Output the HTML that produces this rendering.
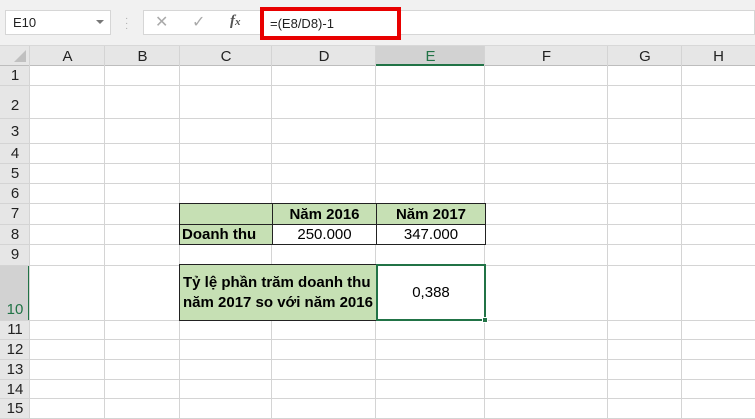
<!DOCTYPE html>
<html><head><style>
body{margin:0;width:755px;height:419px;overflow:hidden;background:#fff;font-family:"Liberation Sans",Arial,sans-serif;position:relative}
.a{position:absolute;box-sizing:border-box}
.hl{position:absolute;left:0;width:755px;height:1px;background:#d4d4d4}
.vl{position:absolute;top:46px;height:373px;width:1px;background:#d4d4d4}
.ch{position:absolute;top:46px;height:20px;line-height:21px;text-align:center;font-size:15px;color:#222}
.rh{position:absolute;left:0;width:30px;text-align:center;font-size:15px;color:#222}
.c{position:absolute;box-sizing:border-box;font-size:15px;display:flex;align-items:center;justify-content:center}
</style></head><body>
<div class="a" style="left:0;top:0;width:755px;height:46px;background:#f1f1f1;border-bottom:1px solid #d8d8d8"></div>
<div class="a" style="left:5px;top:10px;width:106px;height:25px;background:#fff;border:1px solid #d6d6d6;font-size:13px;line-height:23px;padding-left:7px;color:#222">E10</div>
<div class="a" style="left:96px;top:20px;width:0;height:0;border-left:4px solid transparent;border-right:4px solid transparent;border-top:4px solid #777"></div>
<div class="a" style="left:125px;top:16px;font-size:10px;color:#aaa;line-height:5px">·<br>·<br>·</div>
<div class="a" style="left:143px;top:10px;width:612px;height:25px;background:#fff;border:1px solid #d6d6d6"></div>
<div class="a" style="left:155px;top:12px;font-size:16px;color:#aaa">✕</div>
<div class="a" style="left:192px;top:12px;font-size:16px;color:#aaa">✓</div>
<div class="a" style="left:230px;top:13px;font-size:15px;color:#555;font-family:'Liberation Serif',serif;font-style:italic;font-weight:bold">f<span style="font-size:11px">x</span></div>
<div class="a" style="left:260px;top:7px;width:141px;height:33px;border:4px solid #e80000;background:#fff;font-size:13px;line-height:25px;padding-left:6px;color:#222">=(E8/D8)-1</div>
<div class="a" style="left:0;top:46px;width:755px;height:20px;background:#e6e6e6;border-bottom:1px solid #bdbdbd"></div>
<div class="a" style="left:0;top:66px;width:30px;height:353px;background:#e6e6e6;border-right:1px solid #bdbdbd"></div>
<div class="a" style="left:14px;top:50px;width:0;height:0;border-left:12px solid transparent;border-bottom:12px solid #c0c0c0"></div>
<div class="a" style="left:376px;top:46px;width:109px;height:20px;background:#d2d2d2;border-bottom:2px solid #217346"></div>
<div class="a" style="left:0;top:265px;width:30px;height:55px;background:#d2d2d2;border-right:2px solid #217346"></div>
<div class="vl" style="left:29px"></div><div class="vl" style="left:104px"></div><div class="vl" style="left:179px"></div><div class="vl" style="left:271px"></div><div class="vl" style="left:375px"></div><div class="vl" style="left:484px"></div><div class="vl" style="left:607px"></div><div class="vl" style="left:681px"></div>
<div class="ch" style="left:30px;width:75px">A</div><div class="ch" style="left:105px;width:75px">B</div><div class="ch" style="left:180px;width:92px">C</div><div class="ch" style="left:272px;width:104px">D</div><div class="ch" style="left:376px;width:109px;color:#217346">E</div><div class="ch" style="left:485px;width:123px">F</div><div class="ch" style="left:608px;width:74px">G</div><div class="ch" style="left:682px;width:73px">H</div>
<div class="hl" style="top:85px"></div><div class="hl" style="top:118px"></div><div class="hl" style="top:143px"></div><div class="hl" style="top:163px"></div><div class="hl" style="top:183px"></div><div class="hl" style="top:203px"></div><div class="hl" style="top:224px"></div><div class="hl" style="top:244px"></div><div class="hl" style="top:265px"></div><div class="hl" style="top:320px"></div><div class="hl" style="top:339px"></div><div class="hl" style="top:359px"></div><div class="hl" style="top:379px"></div><div class="hl" style="top:398px"></div><div class="hl" style="top:418px"></div>
<div class="rh" style="top:67px;line-height:18px">1</div><div class="rh" style="top:96px;line-height:20px">2</div><div class="rh" style="top:122px;line-height:20px">3</div><div class="rh" style="top:144px;line-height:19px">4</div><div class="rh" style="top:164px;line-height:19px">5</div><div class="rh" style="top:184px;line-height:19px">6</div><div class="rh" style="top:204px;line-height:20px">7</div><div class="rh" style="top:225px;line-height:19px">8</div><div class="rh" style="top:245px;line-height:20px">9</div><div class="rh" style="top:300px;line-height:20px;color:#217346">10</div><div class="rh" style="top:320px;line-height:19px">11</div><div class="rh" style="top:340px;line-height:19px">12</div><div class="rh" style="top:360px;line-height:19px">13</div><div class="rh" style="top:380px;line-height:19px">14</div><div class="rh" style="top:399px;line-height:19px">15</div>
<div class="c" style="left:179px;top:203px;width:94px;height:22px;background:#c6e0b4;border:1px solid #222"></div>
<div class="c" style="left:272px;top:203px;width:105px;height:22px;background:#c6e0b4;border:1px solid #222;font-weight:bold">Năm 2016</div>
<div class="c" style="left:376px;top:203px;width:110px;height:22px;background:#c6e0b4;border:1px solid #222;font-weight:bold">Năm 2017</div>
<div class="c" style="left:179px;top:224px;width:94px;height:21px;background:#c6e0b4;border:1px solid #222;font-weight:bold;justify-content:flex-start;padding-left:2px">Doanh thu</div>
<div class="c" style="left:272px;top:224px;width:105px;height:21px;background:#fff;border:1px solid #222">250.000</div>
<div class="c" style="left:376px;top:224px;width:110px;height:21px;background:#fff;border:1px solid #222">347.000</div>
<div class="c" style="left:179px;top:264px;width:198px;height:57px;background:#c6e0b4;border:1px solid #222;font-weight:bold;line-height:20px;text-align:left;padding-left:3px;justify-content:flex-start">Tỷ lệ phần trăm doanh thu<br>năm 2017 so với năm 2016</div>
<div class="c" style="left:376px;top:264px;width:110px;height:57px;background:#fff;border:2px solid #217346">0,388</div>
<div class="a" style="left:482px;top:317px;width:6px;height:6px;background:#217346;border:1px solid #fff"></div>
</body></html>
